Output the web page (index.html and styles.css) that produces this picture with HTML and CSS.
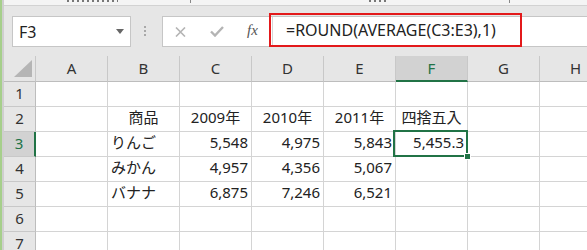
FILE: index.html
```html
<!DOCTYPE html>
<html lang="ja">
<head>
    <meta charset="UTF-8">
    <title>Excel - ROUND</title>
    <link rel="stylesheet" href="styles.css">
</head>
<body>
<div class="window">
    <div class="edge"></div>
    <div class="main">
        <!-- bottom of the ribbon, mostly cut off -->
        <div class="ribbon-tail">
            <span class="ribbon-bit bit-1"></span>
            <span class="launcher launcher-1"></span>
            <span class="ribbon-bit bit-2"></span>
            <span class="launcher launcher-2"></span>
            <span class="ribbon-bit bit-3"></span>
        </div>

        <div class="formula-row">
            <div class="name-box">
                <span>F3</span>
                <svg class="name-arrow" width="8" height="5" viewBox="0 0 8 5"><path d="M0 0 H8 L4 5 Z" fill="#666"/></svg>
            </div>
            <div class="grip"><i></i><i></i><i></i></div>
            <div class="formula-bar">
                <div class="fb-buttons">
                    <svg class="fb-cancel" width="11" height="10" viewBox="0 0 11 10">
                        <path d="M1 0.5 L10 9.5 M10 0.5 L1 9.5" stroke="#b4b4b4" stroke-width="1.6" fill="none"/>
                    </svg>
                    <svg class="fb-enter" width="14" height="11" viewBox="0 0 14 11">
                        <path d="M1 5.5 L5 9.5 L13 1" stroke="#b4b4b4" stroke-width="2.4" fill="none"/>
                    </svg>
                    <span class="fb-fx">fx</span>
                </div>
                <div class="fb-input">=ROUND(AVERAGE(C3:E3),1)</div>
                <div class="callout"></div>
            </div>
        </div>

        <div class="sheet">
            <div class="hd corner">
                <svg width="18" height="17" viewBox="0 0 18 17"><path d="M18 0 V17 H0 Z" fill="#b5b5b5"/></svg>
            </div>
            <div class="hd">A</div>
            <div class="hd">B</div>
            <div class="hd">C</div>
            <div class="hd">D</div>
            <div class="hd">E</div>
            <div class="hd col-active">F</div>
            <div class="hd">G</div>
            <div class="hd">H</div>

            <div class="rh">1</div>
            <div class="c"></div><div class="c"></div><div class="c"></div><div class="c"></div>
            <div class="c"></div><div class="c"></div><div class="c"></div><div class="c"></div>

            <div class="rh">2</div>
            <div class="c"></div>
            <div class="c center">商品</div>
            <div class="c center">2009年</div>
            <div class="c center">2010年</div>
            <div class="c center">2011年</div>
            <div class="c center">四捨五入</div>
            <div class="c"></div><div class="c"></div>

            <div class="rh row-active">3</div>
            <div class="c"></div>
            <div class="c">りんご</div>
            <div class="c num">5,548</div>
            <div class="c num">4,975</div>
            <div class="c num">5,843</div>
            <div class="c num selected">5,455.3</div>
            <div class="c"></div><div class="c"></div>

            <div class="rh">4</div>
            <div class="c"></div>
            <div class="c">みかん</div>
            <div class="c num">4,957</div>
            <div class="c num">4,356</div>
            <div class="c num">5,067</div>
            <div class="c"></div><div class="c"></div><div class="c"></div>

            <div class="rh">5</div>
            <div class="c"></div>
            <div class="c">バナナ</div>
            <div class="c num">6,875</div>
            <div class="c num">7,246</div>
            <div class="c num">6,521</div>
            <div class="c"></div><div class="c"></div><div class="c"></div>

            <div class="rh">6</div>
            <div class="c"></div><div class="c"></div><div class="c"></div><div class="c"></div>
            <div class="c"></div><div class="c"></div><div class="c"></div><div class="c"></div>

            <div class="rh">7</div>
            <div class="c"></div><div class="c"></div><div class="c"></div><div class="c"></div>
            <div class="c"></div><div class="c"></div><div class="c"></div><div class="c"></div>
        </div>
    </div>
</div>
</body>
</html>
```

FILE: styles.css
```css
body {
    margin: 0;
    width: 587px;
    height: 250px;
    overflow: hidden;
    background-color: #ffffff;
    font-family: "Noto Sans", "Noto Sans CJK JP", sans-serif;
    color: #222;
}
.window {
    display: flex;
    height: 250px;
}
.edge {
    width: 2px;
    flex: none;
    background-color: #a6cf8b;
    border-right: 2px solid #cfcfcf;
}
.main {
    flex: 1;
    min-width: 0;
    overflow: hidden;
}

/* ribbon remains */
.ribbon-tail {
    height: 5px;
    display: flex;
    align-items: flex-start;
    background-color: #f4f4f4;
    border-bottom: 1px solid #d2d2d2;
}
.ribbon-bit {
    flex: none;
    height: 2px;
    background-image: repeating-linear-gradient(90deg, #777 0 2px, transparent 2px 5px);
}
.bit-1 {
    margin-left: 63px;
    width: 51px;
}
.bit-2 {
    margin-left: 178px;
    width: 18px;
}
.bit-3 {
    margin-left: 134px;
    width: 10px;
}
.launcher {
    flex: none;
    width: 1px;
    height: 3px;
    background-color: #888;
}
.launcher-1 {
    margin-left: 72px;
}
.launcher-2 {
    margin-left: 122px;
}

/* name box + formula bar */
.formula-row {
    display: flex;
    height: 50px;
    padding: 10px 0 0 8px;
    box-sizing: border-box;
    background-color: #e6e6e6;
}
.name-box {
    width: 119px;
    height: 31px;
    box-sizing: border-box;
    display: flex;
    align-items: center;
    justify-content: space-between;
    padding: 1px 6px 0 6px;
    background-color: #ffffff;
    border: 1px solid #c6c6c6;
    font-size: 16px;
}
.name-arrow {
    margin-top: -2px;
}
.grip {
    width: 31px;
    display: flex;
    flex-direction: column;
    gap: 2px;
    padding: 10px 0 0 13px;
    box-sizing: border-box;
}
.grip i {
    width: 2px;
    height: 2px;
    background-color: #a8a8a8;
}
.formula-bar {
    flex: 1;
    position: relative;
    display: flex;
    height: 31px;
    box-sizing: border-box;
    background-color: #ffffff;
    border: 1px solid #c6c6c6;
    border-right: none;
}
.fb-buttons {
    width: 110px;
    display: flex;
    align-items: center;
    padding-left: 12px;
    box-sizing: border-box;
    border-right: 1px solid #d6d6d6;
}
.fb-cancel {
    margin-right: 24px;
}
.fb-enter {
    margin-right: 23px;
}
.fb-fx {
    font-family: "Liberation Serif", serif;
    font-style: italic;
    font-size: 15px;
    color: #555;
    margin-top: -2px;
}
.fb-input {
    flex: 1;
    padding-left: 13px;
    font-size: 16px;
    line-height: 26px;
    white-space: nowrap;
}
.callout {
    position: absolute;
    left: 106px;
    top: -4px;
    width: 253px;
    height: 34px;
    box-sizing: border-box;
    border: 2px solid #e3191b;
}

/* worksheet grid */
.sheet {
    display: grid;
    grid-template-columns: 32px repeat(8, 72px);
    grid-template-rows: 26px repeat(7, 25px);
    font-size: 15px;
}
.sheet > div {
    box-sizing: border-box;
    border-right: 1px solid #d4d4d4;
    border-bottom: 1px solid #d4d4d4;
    white-space: nowrap;
}
.hd {
    background-color: #e6e6e6;
    text-align: center;
    line-height: 25px;
    color: #333;
    border-right-color: #c8c8c8 !important;
    border-bottom-color: #bdbdbd !important;
}
.corner {
    display: flex;
    align-items: flex-end;
    justify-content: flex-end;
    padding: 0 3px 4px 0;
}
.corner svg {
    display: block;
}
.col-active {
    background-color: #d2d2d2;
    color: #217346;
    border-bottom: 2px solid #217346 !important;
}
.rh {
    background-color: #e6e6e6;
    text-align: center;
    line-height: 22px;
    color: #333;
    border-right-color: #bdbdbd !important;
    border-bottom-color: #c8c8c8 !important;
}
.row-active {
    background-color: #d2d2d2;
    color: #217346;
    border-right: 2px solid #217346 !important;
}
.c {
    padding: 0 3px;
    line-height: 20px;
}
.center {
    text-align: center;
}
.num {
    text-align: right;
}
.selected {
    position: relative;
}
.selected::before {
    content: "";
    position: absolute;
    left: -3px;
    top: -2px;
    right: -1px;
    bottom: -1px;
    border: 2px solid #217346;
}
.selected::after {
    content: "";
    position: absolute;
    right: -4px;
    bottom: -4px;
    width: 5px;
    height: 5px;
    background-color: #217346;
    border: 1px solid #ffffff;
}
```
